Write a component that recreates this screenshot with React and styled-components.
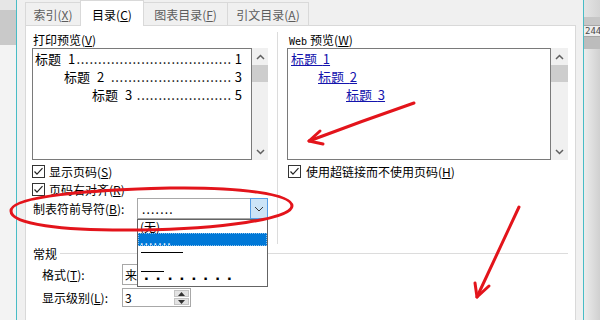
import styled, { createGlobalStyle } from 'styled-components';

const GlobalStyle = createGlobalStyle`
  html, body {
    margin: 0;
    padding: 0;
    width: 600px;
    height: 320px;
    overflow: hidden;
    background: #f0f0f0;
  }
  body {
    font-family: "Noto Sans CJK SC", "Noto Sans", sans-serif;
    font-size: 12px;
    color: #000;
  }
`;

const Screen = styled.div`
  position: relative;
  display: flex;
  width: 600px;
  height: 320px;
  overflow: hidden;
`;

// window behind the dialog, left and right
const LeftBackdrop = styled.div`
  flex: none;
  width: 16px;
  background: linear-gradient(
    to bottom,
    #e6e6e6 0,
    #e6e6e6 10px,
    #c9c9c9 10px,
    #c9c9c9 45px,
    #f3f3f3 45px
  );
`;

const RightBackdrop = styled.div`
  flex: none;
  width: 16px;
  display: flex;
  flex-direction: column;
  background: linear-gradient(to right, #ececec, #d0d0d0);
`;

const RulerTop = styled.div`
  height: 17px;
  background: linear-gradient(to right, #e4e4e4, #d4d4d4);
`;

const RulerBand = styled.div`
  height: 8px;
  background: #c6c6c6;
`;

const RulerNumber = styled.div`
  height: 10px;
  line-height: 10px;
  background: #ededed;
  border-top: 1px solid #a5a5a5;
  border-bottom: 1px solid #a5a5a5;
  color: #4a4a4a;
  font: 9px "DejaVu Sans Mono", monospace;
  padding-left: 1px;
  white-space: nowrap;
  overflow: hidden;
`;

const RulerShade = styled.div`
  height: 12px;
  background: #bcbcbc;
`;

const Dialog = styled.div`
  flex: 1;
  min-width: 0;
  display: flex;
  flex-direction: column;
  background: #f0f0f0;
  border-left: 1px solid #48bcc6;
  border-right: 1px solid #48bcc6;
  padding: 0 7px 0 8px;
`;

const TabStrip = styled.div`
  position: relative;
  z-index: 2;
  display: flex;
  align-items: flex-end;
  height: 25px;
  flex: none;
`;

const Tab = styled.div`
  box-sizing: border-box;
  width: ${p => p.$w}px;
  height: ${p => (p.$active ? 26 : 23)}px;
  margin-bottom: ${p => (p.$active ? -1 : 0)}px;
  margin-left: ${p => (p.$first ? 0 : -1)}px;
  padding-top: ${p => (p.$active ? 7 : 5)}px;
  border: 1px solid #d9d9d9;
  border-bottom: none;
  background: ${p => (p.$active ? '#fff' : '#f0f0f0')};
  color: ${p => (p.$active ? '#000' : '#5c5c5c')};
  position: relative;
  z-index: ${p => (p.$active ? 2 : 1)};
  text-align: center;
  line-height: 14px;
  white-space: nowrap;
`;

const U = styled.span`
  text-decoration: underline;
  text-underline-offset: 1px;
`;

const Panel = styled.div`
  flex: 1;
  display: flex;
  flex-direction: column;
  background: #fff;
  border: 1px solid #d9d9d9;
  border-bottom: none;
  padding: 7px 7px 0 6px;
`;

const Columns = styled.div`
  display: flex;
  align-items: flex-start;
  flex: none;
`;

const Column = styled.div`
  width: ${p => p.$w}px;
  flex: none;
  display: flex;
  flex-direction: column;
`;

const VSep = styled.div`
  flex: none;
  width: 1px;
  height: 212px;
  margin: -1px 9px 0;
  background: #dcdcdc;
`;

const FieldLabel = styled.div`
  height: 14px;
  line-height: 14px;
  margin-left: ${p => p.$indent || 1}px;
  white-space: nowrap;
`;

const Mono = styled.span`
  font-family: "DejaVu Sans Mono", "Liberation Mono", monospace;
  font-size: 10px;
  margin-right: 3px;
`;

const ListRow = styled.div`
  display: flex;
  margin-top: 1px;
  height: 112px;
`;

const PreviewBox = styled.div`
  box-sizing: border-box;
  width: ${p => p.$w}px;
  height: 112px;
  border: 1px solid #7a7a7a;
  padding: 1px 9px 0 2px;
  overflow: hidden;
`;

const PreviewLine = styled.div`
  display: flex;
  align-items: baseline;
  height: 18px;
  line-height: 18px;
  padding-left: ${p => p.$indent}px;
  font-size: 13px;
  white-space: nowrap;
`;

const Num = styled.span`
  margin-left: 7px;
`;

const Leader = styled.span`
  flex: 1;
  min-width: 0;
  text-align: right;
  letter-spacing: 0.7px;
  margin: 0 3px 0 ${p => p.$gap}px;
`;

const WebLink = styled.a`
  display: block;
  height: 18px;
  line-height: 18px;
  margin-left: ${p => p.$indent}px;
  font-size: 13px;
  color: #1414ad;
  text-decoration: underline;
  white-space: nowrap;
`;

const ScrollBar = styled.div`
  width: ${p => p.$w}px;
  flex: none;
  display: flex;
  flex-direction: column;
  background: #f0f0f0;
`;

const ScrollArrow = styled.div`
  height: 17px;
  display: flex;
  align-items: center;
  justify-content: center;
`;

const Thumb = styled.div`
  height: 17px;
  background: #cdcdcd;
`;

const Track = styled.div`
  flex: 1;
`;

const CheckRow = styled.div`
  display: flex;
  align-items: center;
  height: 18px;
  margin-top: ${p => p.$top || 0}px;
  margin-left: ${p => p.$indent || 0}px;
  white-space: nowrap;
`;

const Box = styled.span`
  box-sizing: border-box;
  width: 13px;
  height: 13px;
  border: 1px solid #333;
  background: #fff;
  margin-right: ${p => p.$gap || 4}px;
  display: flex;
  align-items: center;
  justify-content: center;
  flex: none;
`;

const FieldRow = styled.div`
  display: flex;
  align-items: center;
  height: ${p => p.$h}px;
  margin-top: ${p => p.$top || 0}px;
`;

const RowLabel = styled.div`
  width: ${p => p.$w}px;
  margin-left: ${p => p.$indent}px;
  flex: none;
  line-height: 14px;
  white-space: nowrap;
`;

const Combo = styled.div`
  position: relative;
  box-sizing: border-box;
  width: ${p => p.$w}px;
  height: ${p => p.$h}px;
  display: flex;
  align-items: center;
  border: 1px solid #a8a8a8;
  background: #fff;
`;

const ComboText = styled.div`
  flex: 1;
  padding-left: ${p => p.$pad || 3}px;
  line-height: 14px;
  white-space: nowrap;
  overflow: hidden;
  letter-spacing: ${p => p.$spacing || 0}px;
`;

const ComboButton = styled.div`
  box-sizing: border-box;
  align-self: stretch;
  width: 18px;
  margin: -1px -1px -1px 0;
  border: 1px solid #569de5;
  background: #cce4f7;
  display: flex;
  align-items: center;
  justify-content: center;
`;

const DropList = styled.div`
  position: absolute;
  z-index: 5;
  top: calc(100% + 1px);
  left: -1px;
  box-sizing: border-box;
  width: 131px;
  border: 1px solid #646464;
  background: #fff;
  padding-bottom: 1px;
`;

const DropItem = styled.div`
  box-sizing: border-box;
  height: 13px;
  display: flex;
  align-items: ${p => p.$align || 'center'};
  padding-left: 2px;
  line-height: 13px;
  white-space: nowrap;
  background: ${p => (p.$selected ? '#0078d7' : 'transparent')};
  color: ${p => (p.$selected ? '#fff' : '#000')};
  outline: ${p => (p.$selected ? '1px dotted rgba(255,255,255,0.55)' : 'none')};
  outline-offset: -1px;
  letter-spacing: ${p => p.$spacing || 0}px;
`;

const LeaderLine = styled.span`
  display: block;
  width: ${p => p.$w}px;
  height: 1px;
  background: #000;
  margin-left: 1px;
`;

const MiddleDots = styled.span`
  margin-left: 4px;
  font-family: "Liberation Sans", sans-serif;
  font-size: 17px;
  font-weight: bold;
  letter-spacing: 6.2px;
  line-height: 13px;
`;

const GroupHeader = styled.div`
  display: flex;
  align-items: center;
  height: 14px;
  margin: 2px 0 0 1px;
  gap: 3px;
`;

const GroupRule = styled.div`
  flex: 1;
  height: 1px;
  background: #dcdcdc;
`;

const Spinner = styled.div`
  box-sizing: border-box;
  width: 69px;
  height: 19px;
  display: flex;
  border: 1px solid #a8a8a8;
  background: #fff;
`;

const SpinValue = styled.div`
  flex: 1;
  padding-left: 2px;
  line-height: 17px;
`;

const SpinButtons = styled.div`
  width: 15px;
  display: flex;
  flex-direction: column;
  margin: 1px 1px 1px 0;
  gap: 1px;
`;

const SpinHalf = styled.div`
  flex: 1;
  background: #e3e3e3;
  border: 1px solid #c4c4c4;
  display: flex;
  align-items: center;
  justify-content: center;
`;

const Annotation = styled.svg`
  position: absolute;
  left: 0;
  top: 0;
  z-index: 10;
  pointer-events: none;
`;

const Caret = ({ down }) => (
  <svg width="9" height="6" viewBox="0 0 9 6">
    <polyline
      points={down ? '1,1 4.5,4.5 8,1' : '1,5 4.5,1.5 8,5'}
      fill="none"
      stroke="#606060"
      strokeWidth="1.5"
    />
  </svg>
);

const Check = () => (
  <svg width="11" height="11" viewBox="0 0 11 11">
    <polyline points="1.5,5.5 4,8.2 9.5,2.2" fill="none" stroke="#222" strokeWidth="1.2" />
  </svg>
);

const Chevron = () => (
  <svg width="10" height="6" viewBox="0 0 10 6">
    <polyline points="1,1 5,5 9,1" fill="none" stroke="#3a3a3a" strokeWidth="1" />
  </svg>
);

const SpinArrow = ({ down }) => (
  <svg width="7" height="4" viewBox="0 0 7 4">
    <polygon points={down ? '0,0 7,0 3.5,4' : '0,4 7,4 3.5,0'} fill="#333" />
  </svg>
);

const VScroll = ({ w }) => (
  <ScrollBar $w={w}>
    <ScrollArrow><Caret /></ScrollArrow>
    <Thumb />
    <Track />
    <ScrollArrow><Caret down /></ScrollArrow>
  </ScrollBar>
);

const tocLines = [
  { indent: 0, n: '1', page: '1', gap: 0, dots: 36 },
  { indent: 29, n: '2', page: '3', gap: 3, dots: 28 },
  { indent: 57, n: '3', page: '5', gap: 3, dots: 22 },
];

const webLinks = [
  { indent: 1, n: '1' },
  { indent: 28, n: '2' },
  { indent: 56, n: '3' },
];

export default function App() {
  return (
    <Screen>
      <GlobalStyle />
      <LeftBackdrop />
      <Dialog>
        <TabStrip>
          <Tab $first $w={56}>索引(<U>X</U>)</Tab>
          <Tab $active $w={64}>目录(<U>C</U>)</Tab>
          <Tab $w={85}>图表目录(<U>F</U>)</Tab>
          <Tab $w={82}>引文目录(<U>A</U>)</Tab>
        </TabStrip>
        <Panel>
          <Columns>
            <Column $w={236}>
              <FieldLabel>打印预览(<U>V</U>)</FieldLabel>
              <ListRow>
                <PreviewBox $w={220}>
                  {tocLines.map(l => (
                    <PreviewLine key={l.n} $indent={l.indent}>
                      <span>标题</span>
                      <Num>{l.n}</Num>
                      <Leader $gap={l.gap}>{'.'.repeat(l.dots)}</Leader>
                      <span>{l.page}</span>
                    </PreviewLine>
                  ))}
                </PreviewBox>
                <VScroll w={16} />
              </ListRow>
              <CheckRow $top={2}>
                <Box><Check /></Box>显示页码(<U>S</U>)
              </CheckRow>
              <CheckRow>
                <Box><Check /></Box>页码右对齐(<U>R</U>)
              </CheckRow>
              <FieldRow $h={21}>
                <RowLabel $w={104} $indent={1}>制表符前导符(<U>B</U>):</RowLabel>
                <Combo $w={131} $h={21}>
                  <ComboText $pad={4} $spacing={1.2}>.......</ComboText>
                  <ComboButton><Chevron /></ComboButton>
                  <DropList>
                    <DropItem>(无)</DropItem>
                    <DropItem $selected $spacing={1.2} $align="flex-end">.......</DropItem>
                    <DropItem><LeaderLine $w={42} /></DropItem>
                    <DropItem $align="flex-end"><LeaderLine $w={23} /></DropItem>
                    <DropItem><MiddleDots>········</MiddleDots></DropItem>
                  </DropList>
                </Combo>
              </FieldRow>
            </Column>
            <VSep />
            <Column $w={281}>
              <FieldLabel $indent={2}><Mono>Web</Mono>预览(<U>W</U>)</FieldLabel>
              <ListRow>
                <PreviewBox $w={264}>
                  {webLinks.map(l => (
                    <WebLink key={l.n} $indent={l.indent}>标题&nbsp;&nbsp;{l.n}</WebLink>
                  ))}
                </PreviewBox>
                <VScroll w={17} />
              </ListRow>
              <CheckRow $top={2} $indent={1}>
                <Box $gap={5}><Check /></Box>使用超链接而不使用页码(<U>H</U>)
              </CheckRow>
            </Column>
          </Columns>
          <GroupHeader>
            <span>常规</span>
            <GroupRule />
          </GroupHeader>
          <FieldRow $h={21} $top={4}>
            <RowLabel $w={80} $indent={10}>格式(<U>T</U>):</RowLabel>
            <Combo $w={140} $h={21}>
              <ComboText $pad={2}>来自模板</ComboText>
            </Combo>
          </FieldRow>
          <FieldRow $h={19} $top={3}>
            <RowLabel $w={80} $indent={10}>显示级别(<U>L</U>):</RowLabel>
            <Spinner>
              <SpinValue>3</SpinValue>
              <SpinButtons>
                <SpinHalf><SpinArrow /></SpinHalf>
                <SpinHalf><SpinArrow down /></SpinHalf>
              </SpinButtons>
            </Spinner>
          </FieldRow>
        </Panel>
      </Dialog>
      <RightBackdrop>
        <RulerTop />
        <RulerBand />
        <RulerNumber>244</RulerNumber>
        <RulerShade />
      </RightBackdrop>

      {/* red hand-drawn marks over the dialog */}
      <Annotation width="600" height="320" viewBox="0 0 600 320">
        <g fill="none" stroke="#e3141b" strokeWidth="3" strokeLinecap="round" strokeLinejoin="round">
          <path d="M 11 211 C 11 196, 90 190, 170 188 C 240 187, 292 194, 292 206 C 292 219, 220 229, 140 230 C 60 231, 11 224, 11 211" />
          <path d="M 414 103 Q 362 121, 309 141" />
          <path d="M 320 131 L 309 141 L 323 144" />
          <path d="M 519 207 L 477 297" />
          <path d="M 475 283 L 477 297 L 489 286" />
        </g>
      </Annotation>
    </Screen>
  );
}
